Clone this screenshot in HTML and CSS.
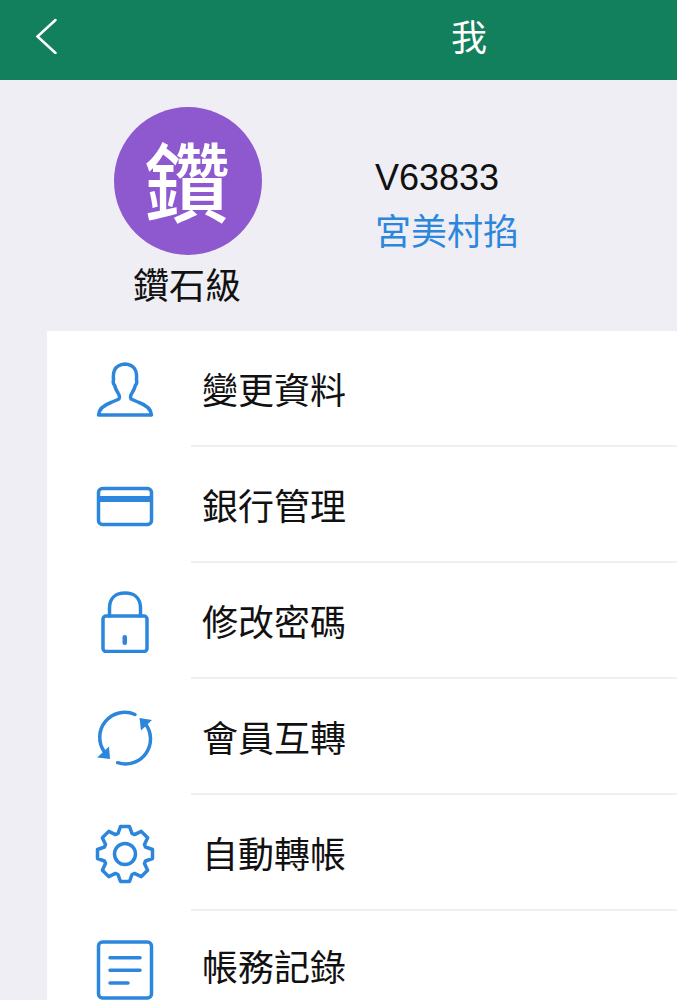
FILE: index.html
```html
<!DOCTYPE html>
<html lang="zh-Hant">
<head>
    <meta charset="UTF-8">
    <meta name="viewport" content="width=device-width, initial-scale=1.0">
    <title>我</title>
    <link rel="stylesheet" href="styles.css">
</head>
<body>
    <header class="topbar">
        <svg class="back" width="24" height="36" viewBox="0 0 24 36">
            <path d="M21.5 2 L3.5 18.500 L21.5 35" />
        </svg>
        <h1 class="title">我</h1>
    </header>

    <section class="profile">
        <div class="level">
            <div class="badge">鑽</div>
            <div class="level-name">鑽石級</div>
        </div>
        <div class="account">
            <div class="account-id">V63833</div>
            <div class="account-name">宮美村掐</div>
        </div>
    </section>

    <ul class="menu">
        <li class="menu-item">
            <span class="menu-icon">
                <svg width="64" height="64" viewBox="0 0 64 64">
                    <path d="M5.500 58 C6 52 11 48 18 45.500 L26 42 C27 41 26.500 38 25 36 C23 33 22 30 21.500 28 C20 27 20 24 20.500 23 C20 17 20 8 32 7 C44 8 44 17 43.500 23 C44 24 44 27 42.500 28 C42 30 41 33 39 36 C37.500 38 37 41 38 42 L46 45.500 C53 48 58 52 58.500 58 Z" />
                </svg>
            </span>
            <span class="menu-text">變更資料</span>
        </li>
        <li class="menu-item">
            <span class="menu-icon">
                <svg width="64" height="64" viewBox="0 0 64 64">
                    <rect x="5.500" y="15.500" width="53" height="36" rx="4" />
                    <rect class="solid" x="5.500" y="23" width="53" height="6" />
                </svg>
            </span>
            <span class="menu-text">銀行管理</span>
        </li>
        <li class="menu-item">
            <span class="menu-icon">
                <svg width="64" height="64" viewBox="0 0 64 64">
                    <path d="M16.500 27 V19 C16.500 9 23 4 32 4 C41 4 47.500 9 47.500 19 V27" />
                    <rect x="10" y="27" width="44" height="35.500" rx="3" />
                    <rect class="solid" x="29.500" y="46" width="4.500" height="10" rx="2.200" />
                </svg>
            </span>
            <span class="menu-text">修改密碼</span>
        </li>
        <li class="menu-item">
            <span class="menu-icon">
                <svg width="64" height="64" viewBox="0 0 64 64">
                    <path d="M42 9.500 A25 25 0 0 0 11.300 46.700" />
                    <path d="M24.700 57.700 A25 25 0 0 0 52 18.300" />
                    <path class="solid" d="M4.200 52.500 L17 54 L16 41.500 Z" />
                    <path class="solid" d="M59 15 L46.500 13 L48 25.500 Z" />
                </svg>
            </span>
            <span class="menu-text">會員互轉</span>
        </li>
        <li class="menu-item">
            <span class="menu-icon">
                <svg width="64" height="64" viewBox="0 0 64 64">
                    <g transform="translate(32 33)">
                        <path d="M-4.500 -27.500 L4.500 -27.500 L7 -20.500 L9.550 -19.450 L16.260 -22.630 L22.630 -16.260 L19.450 -9.550 L20.500 -7 L27.500 -4.500 L27.500 4.500 L20.500 7 L19.450 9.550 L22.630 16.260 L16.260 22.630 L9.550 19.450 L7 20.500 L4.500 27.500 L-4.500 27.500 L-7 20.500 L-9.550 19.450 L-16.260 22.630 L-22.630 16.260 L-19.450 9.550 L-20.500 7 L-27.500 4.500 L-27.500 -4.500 L-20.500 -7 L-19.450 -9.550 L-22.630 -16.260 L-16.260 -22.630 L-9.550 -19.450 L-7 -20.500 Z" />
                        <circle r="10.500" />
                    </g>
                </svg>
            </span>
            <span class="menu-text">自動轉帳</span>
        </li>
        <li class="menu-item">
            <span class="menu-icon">
                <svg width="64" height="64" viewBox="0 0 64 64">
                    <rect x="5.500" y="5" width="53" height="56" rx="4" />
                    <path d="M17 20.700 H47 M17 33.300 H47 M17 46 H35" />
                </svg>
            </span>
            <span class="menu-text">帳務記錄</span>
        </li>
    </ul>
</body>
</html>
```
FILE: styles.css
```css
html, body {
    margin: 0;
    height: 100%;
    overflow: hidden;
}

body {
    background-color: #efeef4;
    color: #111;
    font-family: "Liberation Sans", "Noto Sans CJK TC", sans-serif;
    font-size: 36px;
}

/* top bar */
.topbar {
    display: flex;
    align-items: center;
    height: 80px;
    padding-left: 34px;
    background-color: #13805d;
    color: #fff;
}

.back {
    margin-top: -8px;
    fill: none;
    stroke: #fff;
    stroke-width: 2.500;
    stroke-linecap: round;
}

.title {
    margin: -10px 0 0 393px;
    font-size: 36px;
    font-weight: 400;
}

/* avatar + account */
.profile {
    display: flex;
    height: 224px;
    padding: 27px 0 0 114px;
}

.level {
    width: 148px;
    text-align: center;
}

.badge {
    width: 146px;
    height: 148px;
    padding-right: 2px;
    border-radius: 50%;
    background-color: #8e58cf;
    color: #fff;
    font-size: 86px;
    font-weight: 500;
    line-height: 158px;
}

.level-name {
    margin: 5px 0 0 -2px;
    line-height: 54px;
    white-space: nowrap;
}

.account {
    margin: 43px 0 0 113px;
    line-height: 55px;
}

.account-name {
    color: #2c87dc;
}

/* menu */
.menu {
    margin: 0 0 0 47px;
    padding: 0;
    background-color: #fff;
    list-style: none;
}

.menu-item {
    display: flex;
    height: 116px;
}

.menu-icon {
    display: flex;
    align-items: center;
    flex: none;
    width: 98px;
    padding-left: 46px;
}

.menu-icon svg {
    display: block;
    fill: none;
    stroke: #2c87dc;
    stroke-width: 3.500;
    stroke-linejoin: round;
    stroke-linecap: round;
}

.menu-icon .solid {
    fill: #2c87dc;
    stroke: none;
}

.menu-text {
    display: flex;
    align-items: center;
    flex: 1;
    padding-left: 11px;
    border-bottom: 2px solid #efeef4;
}

.menu-item:last-child .menu-text {
    padding-bottom: 8px;
    border-bottom: 0;
}
```
